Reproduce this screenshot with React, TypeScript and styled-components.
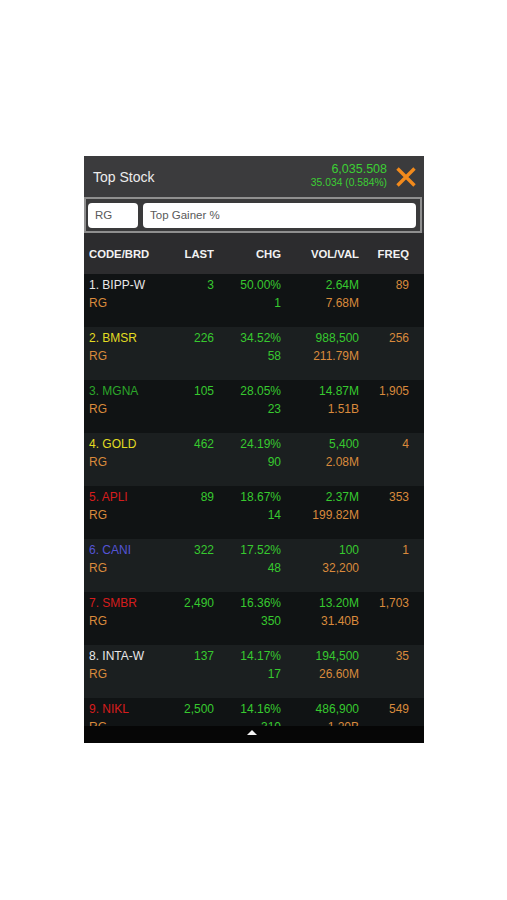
import React from 'react';
import styled, { createGlobalStyle } from 'styled-components';

const GlobalStyle = createGlobalStyle`
  html, body {
    margin: 0;
    padding: 0;
    background: #ffffff;
  }
  body {
    font-family: "Liberation Sans", Arial, sans-serif;
  }
`;

const Page = styled.div`
  padding: 156px 0 0 84px;
`;

const Panel = styled.div`
  width: 340px;
  display: flex;
  flex-direction: column;
  background: #111415;
`;

const TitleBar = styled.div`
  height: 41px;
  display: flex;
  align-items: center;
  padding: 0 7px 0 9px;
  background: #3b3b3d;
`;

const Title = styled.div`
  flex: 1;
  color: #ececec;
  font-size: 14px;
`;

const IndexBlock = styled.div`
  display: flex;
  flex-direction: column;
  align-items: flex-end;
  margin-right: 8px;
  color: #3ccf34;
`;

const IndexValue = styled.div`
  font-size: 12.5px;
  line-height: 14px;
  margin-top: -3px;
`;

const IndexChange = styled.div`
  font-size: 10.3px;
  line-height: 13px;
`;

const CloseButton = styled.button`
  width: 22px;
  height: 22px;
  padding: 0;
  border: none;
  background: none;
  display: flex;
  align-items: center;
  justify-content: center;
  cursor: pointer;
`;

const FilterWrap = styled.div`
  background: #3b3b3d;
  padding-right: 2px;
`;

const FilterStrip = styled.div`
  height: 36px;
  box-sizing: border-box;
  border: 2px solid #8f8f8f;
  background: #3a3a3b;
  display: flex;
  align-items: center;
  gap: 5px;
  padding: 0 4px 0 2px;
`;

const FilterBox = styled.div<{ $grow?: boolean }>`
  height: 25px;
  box-sizing: border-box;
  border-radius: 4px;
  background: #ffffff;
  display: flex;
  align-items: center;
  padding-left: 7px;
  color: #5a5a5a;
  font-size: 11.5px;
  ${(p) => (p.$grow ? 'flex: 1;' : 'width: 50px;')}
`;

const Grid = styled.div`
  display: grid;
  grid-template-columns: 80px 45px 67px 78px 50px;
  padding: 0 15px 0 5px;
`;

const HeaderRow = styled(Grid)`
  height: 41px;
  align-items: center;
  background: #2c2c2e;
  color: #f2f2f2;
  font-size: 11.3px;
  font-weight: 700;
`;

const HeadCell = styled.div<{ $left?: boolean }>`
  text-align: ${(p) => (p.$left ? 'left' : 'right')};
`;

const List = styled.div`
  height: 452px;
  overflow: hidden;
`;

const Row = styled(Grid)<{ $odd: boolean }>`
  height: 53px;
  box-sizing: border-box;
  padding-top: 2px;
  background: ${(p) => (p.$odd ? '#101314' : '#1b1f20')};
  font-size: 12px;
  line-height: 18px;
`;

const Cell = styled.div<{ $left?: boolean }>`
  display: flex;
  flex-direction: column;
  align-items: ${(p) => (p.$left ? 'flex-start' : 'flex-end')};
  white-space: nowrap;
`;

const Text = styled.span<{ $c: string }>`
  color: ${(p) => p.$c};
  height: 18px;
`;

const BottomBar = styled.div`
  height: 17px;
  background: #060606;
  display: flex;
  justify-content: center;
  padding-top: 4px;
  box-sizing: border-box;
`;

const Arrow = styled.div`
  width: 0;
  height: 0;
  margin-right: 4px;
  border-left: 5px solid transparent;
  border-right: 5px solid transparent;
  border-bottom: 5px solid #f4f4f4;
`;

const GREEN = '#37c92f';
const ORANGE = '#d98a3c';

const CODE_COLORS: Record<string, string> = {
  white: '#e8e8e8',
  yellow: '#e2dc22',
  green: '#2ca62a',
  red: '#d61d1d',
  blue: '#5454d6',
};

type Stock = {
  code: string;
  color: keyof typeof CODE_COLORS;
  last: string;
  pct: string;
  chg: string;
  vol: string;
  val: string;
  freq: string;
};

const stocks: Stock[] = [
  { code: '1. BIPP-W', color: 'white', last: '3', pct: '50.00%', chg: '1', vol: '2.64M', val: '7.68M', freq: '89' },
  { code: '2. BMSR', color: 'yellow', last: '226', pct: '34.52%', chg: '58', vol: '988,500', val: '211.79M', freq: '256' },
  { code: '3. MGNA', color: 'green', last: '105', pct: '28.05%', chg: '23', vol: '14.87M', val: '1.51B', freq: '1,905' },
  { code: '4. GOLD', color: 'yellow', last: '462', pct: '24.19%', chg: '90', vol: '5,400', val: '2.08M', freq: '4' },
  { code: '5. APLI', color: 'red', last: '89', pct: '18.67%', chg: '14', vol: '2.37M', val: '199.82M', freq: '353' },
  { code: '6. CANI', color: 'blue', last: '322', pct: '17.52%', chg: '48', vol: '100', val: '32,200', freq: '1' },
  { code: '7. SMBR', color: 'red', last: '2,490', pct: '16.36%', chg: '350', vol: '13.20M', val: '31.40B', freq: '1,703' },
  { code: '8. INTA-W', color: 'white', last: '137', pct: '14.17%', chg: '17', vol: '194,500', val: '26.60M', freq: '35' },
  { code: '9. NIKL', color: 'red', last: '2,500', pct: '14.16%', chg: '310', vol: '486,900', val: '1.20B', freq: '549' },
];

function CloseIcon() {
  return (
    <svg width="22" height="22" viewBox="0 0 22 22">
      <path d="M2.5 2.5 L19.5 19.5 M19.5 2.5 L2.5 19.5" stroke="#f28a1c" strokeWidth="3.4" strokeLinecap="butt" />
    </svg>
  );
}

function StockRow({ s, odd }: { s: Stock; odd: boolean }) {
  return (
    <Row $odd={odd}>
      <Cell $left>
        <Text $c={CODE_COLORS[s.color]}>{s.code}</Text>
        <Text $c={ORANGE}>RG</Text>
      </Cell>
      <Cell>
        <Text $c={GREEN}>{s.last}</Text>
      </Cell>
      <Cell>
        <Text $c={GREEN}>{s.pct}</Text>
        <Text $c={GREEN}>{s.chg}</Text>
      </Cell>
      <Cell>
        <Text $c={GREEN}>{s.vol}</Text>
        <Text $c={ORANGE}>{s.val}</Text>
      </Cell>
      <Cell>
        <Text $c={ORANGE}>{s.freq}</Text>
      </Cell>
    </Row>
  );
}

export default function App() {
  return (
    <Page>
      <GlobalStyle />
      <Panel>
        <TitleBar>
          <Title>Top Stock</Title>
          <IndexBlock>
            <IndexValue>6,035.508</IndexValue>
            <IndexChange>35.034 (0.584%)</IndexChange>
          </IndexBlock>
          <CloseButton aria-label="close">
            <CloseIcon />
          </CloseButton>
        </TitleBar>
        <FilterWrap>
          <FilterStrip>
            <FilterBox>RG</FilterBox>
            <FilterBox $grow>Top Gainer %</FilterBox>
          </FilterStrip>
        </FilterWrap>
        <HeaderRow>
          <HeadCell $left>CODE/BRD</HeadCell>
          <HeadCell>LAST</HeadCell>
          <HeadCell>CHG</HeadCell>
          <HeadCell>VOL/VAL</HeadCell>
          <HeadCell>FREQ</HeadCell>
        </HeaderRow>
        <List>
          {stocks.map((s, i) => (
            <StockRow key={s.code} s={s} odd={i % 2 === 0} />
          ))}
        </List>
        <BottomBar>
          <Arrow />
        </BottomBar>
      </Panel>
    </Page>
  );
}
